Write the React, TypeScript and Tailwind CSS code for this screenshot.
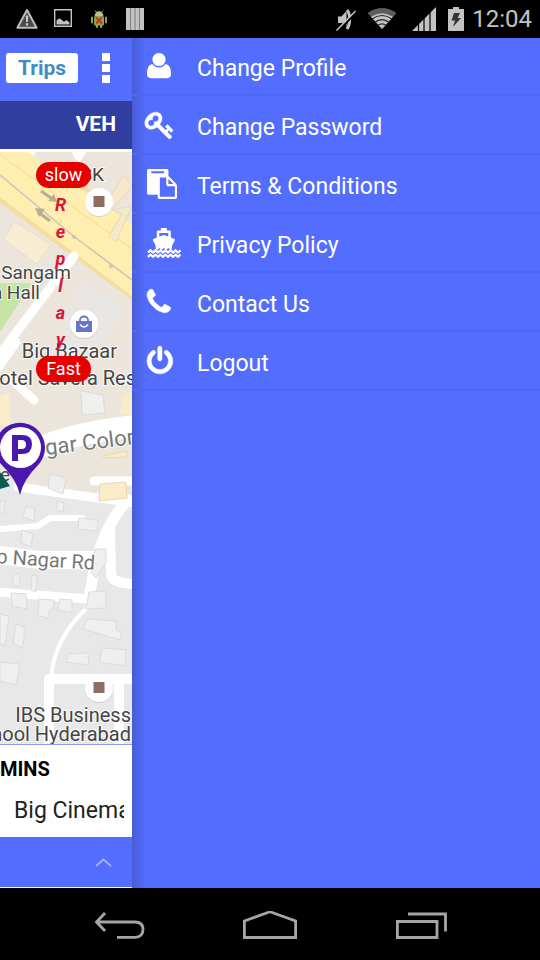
import type { ReactNode } from 'react'

const App = () => {
  return (
    <div className="min-h-screen flex flex-col overflow-hidden bg-[#536dfe] font-[Roboto,sans-serif]">
      <StatusBar />
      <div className="flex flex-1">
        <TripsPage />
        <Drawer />
      </div>
      <NavigationBar />
    </div>
  )
}

const StatusBar = () => {
  return (
    <header className="h-[38px] flex items-center justify-between bg-black pl-4 pr-2 text-[#c3c3c3]">
      <div className="flex items-center gap-[14px]">
        <svg viewBox="0 0 22 22" className="size-[22px]">
          <path d="M11 2 20.6 19.8H1.4Z" fill="#4a4a4a" stroke="#bdbdbd" strokeWidth="2" strokeLinejoin="round" />
          <path d="M9.8 7.5h2.4l-.4 6.5h-1.6zM9.9 15.2h2.2v2.2H9.9z" fill="#d0d0d0" />
        </svg>
        <svg viewBox="0 0 22 22" className="size-[22px]" fill="currentColor">
          <path d="M2 1h18v18H2zM3.4 2.4v15.2h15.2V2.4z" fillRule="evenodd" />
          <path d="M4.5 16.500v-4l2-1.800h1.800l2.400 2 1.300 1 2.500-1.800 3 2.600v2z" />
        </svg>
        <svg viewBox="0 0 22 22" className="size-[22px]">
          <g fill="#8ba653">
            <path d="M6.6 8c.2-3 2-4.700 4.400-4.700s4.200 1.700 4.400 4.700z" fill="#b4c58e" />
            <path d="M7 2.500l1.500 2M15 2.500l-1.500 2" stroke="#9ab068" strokeWidth="1" />
            <rect x="6" y="8" width="10" height="9.500" rx="1.500" />
            <rect x="3" y="8.500" width="2" height="7" rx="1" />
            <rect x="17" y="8.500" width="2" height="7" rx="1" />
            <rect x="7.800" y="16" width="2.200" height="4" rx="1" />
            <rect x="12" y="16" width="2.200" height="4" rx="1" />
          </g>
          <path d="M8 9.500l6 6M14 9.500l-6 6" stroke="#c03a1c" strokeWidth="2.200" />
        </svg>
        <svg viewBox="0 0 22 22" className="size-[22px]">
          <path d="M2 0h18v22H2z" fill="#c2c2c2" />
          <path d="M6.500 0v22M11 0v22M15.500 0v22" stroke="#7d7d7d" />
        </svg>
      </div>
      <div className="flex items-center">
        <div className="flex items-center gap-3">
          <svg viewBox="0 0 22 24" className="h-6 w-[22px]" fill="none" stroke="currentColor">
            <path d="M4 9.500h3.500l5-5.500v15l-3-3H4z" fill="currentColor" stroke="none" />
            <path d="M13 3c3.500 4 3.500 14 0 19" strokeWidth="3" />
            <path d="M4 24.500 22 5.500" stroke="#000" strokeWidth="2" />
            <path d="M2.500 23.500 21.500 4" strokeWidth="1.500" />
          </svg>
          <svg viewBox="0 0 32 24" className="h-6 w-8">
            <path d="M14 22-.5 6Q14-4 28.500 6z" fill="#5c5c5c" />
            <path d="M14 22 3 9.800Q14 2.500 25 9.800z" fill="#c3c3c3" />
            <path d="M4 12Q14 5 24 12M7 15.300Q14 10 21 15.300M10 18.300Q14 15.500 18 18.300" fill="none" stroke="#222" strokeWidth="1.200" />
          </svg>
          <svg viewBox="0 0 24 24" className="size-6">
            <path d="M0 24 24 0v24z" fill="currentColor" />
            <path d="M6.500 0v24M12 0v24M18 0v24" stroke="#000" strokeWidth="1.200" />
          </svg>
          <svg viewBox="0 0 16 24" className="h-6 w-4">
            <path d="M5 0h6v2h5v22H0V2h5z" fill="currentColor" />
            <path d="M6 6h6l-2.500 5H13L5 20l2-6.500H3.500z" fill="#333" />
          </svg>
        </div>
        <span className="ml-2 text-2xl">12:04</span>
      </div>
    </header>
  )
}

const TripsPage = () => {
  return (
    <main className="w-[132px] shrink-0 flex flex-col overflow-hidden bg-white">
      <div className="h-[63px] flex items-center justify-between bg-[#536dfe] pl-1.5 pr-5 pb-1">
        <button className="h-[30px] w-[72px] rounded-[3px] bg-white text-[21px] leading-[30px] font-bold text-[#3f8cc5]">
          Trips
        </button>
        <button aria-label="More" className="w-3 flex flex-col items-center gap-[3px]">
          <span className="size-2 bg-white" />
          <span className="size-2 bg-white" />
          <span className="size-2 bg-white" />
        </button>
      </div>
      <div className="h-12 flex items-center justify-end bg-[#303f9f] pr-4 text-[21px] font-bold text-white">
        VEH
      </div>
      <div className="relative flex-1 border-t-3 border-white">
        <TripMap />
        <div className="absolute left-9 top-2.5 flex flex-col items-center gap-[3px]">
          <button className="h-[26px] w-[55px] rounded-full bg-[#e60000] text-lg leading-[26px] text-white">
            slow
          </button>
          <div className="flex flex-col pr-1.5 text-center text-lg leading-[27px] font-bold italic text-[#dc143c]">
            {['R', 'e', 'p', 'l', 'a', 'y'].map((letter) => (
              <span key={letter}>{letter}</span>
            ))}
          </div>
          <button className="h-[26px] w-[55px] rounded-full bg-[#e60000] text-lg leading-[26px] text-white">
            Fast
          </button>
        </div>
      </div>
      <div className="h-[93px] border-t border-[#8c9cf0] pt-2 text-black">
        <p className="text-xl leading-8 font-bold">MINS</p>
        <p className="mt-2 ml-3.5 mr-2 overflow-hidden whitespace-nowrap text-[23px] leading-9 text-[#222]">
          Big Cinemas
        </p>
      </div>
      <button aria-label="Expand" className="h-[51px] flex items-center justify-end border-b border-white bg-[#536dfe] pr-5">
        <svg viewBox="0 0 17 9" className="h-[9px] w-[17px]">
          <path d="M1 8 8.500 1.500 16 8" fill="none" stroke="#a5b2ff" strokeWidth="1.800" />
        </svg>
      </button>
    </main>
  )
}

const TripMap = () => {
  return (
    <svg viewBox="0 152 132 592" preserveAspectRatio="xMinYMin slice" className="absolute inset-0 size-full">
      <path d="M0 152h132v592H0z" fill="#e8e8e8" />
      <path d="M0 152h132v352L0 478z" fill="#ebe5dc" />
      <path d="M82 280 125 313 68 384 40 372z" fill="#e8e7e4" />
      <path d="M0 283h24l8 0-32 49z" fill="#c5e4a5" />

      {/* highway */}
      <path d="M20 152 36 152 26 166 12 160zM72 152h14l-8 14z" fill="#fff" />
      <path d="M-4 148 24 152 92 191 132 245V300L0 203z" fill="#f4dda0" />
      <path d="M0 153 132 247V296L0 197z" fill="#ffeeb0" />
      <path d="M28 152 132 224V250L0 156V152z" fill="#ffeeb0" />
      <path d="M0 155 132 249" stroke="#f2db99" />
      <path d="M0 175 72 235 132 280" fill="none" stroke="#c9c5b7" strokeWidth="1.500" />
      <path d="M41 191 54 200M50 221 38 212" stroke="#b5ae97" strokeWidth="3" />
      <path d="M57 202 48 201 54 194zM35 208 45 209 39 217z" fill="#b5ae97" />
      <circle cx="74" cy="237" r="2" fill="#c9c5b7" />
      <circle cx="111" cy="266" r="2" fill="#c9c5b7" />

      {/* buildings in the north */}
      <path d="M14 221 51 245 37 264 4 240z" fill="#f8edd2" stroke="#eadfc8" />
      <path d="M124 175 132 186 112 210 132 206 116 242 109 236 122 214 104 206z" fill="#f6e9cb" stroke="#e7d9b8" />
      <path d="M0 396 10 392V428L0 425zM122 396 132 392V415L120 414z" fill="#faecc8" />
      <path d="M81 391 103 395 105 413 82 415z" fill="#efefed" stroke="#dedbd3" />

      {/* streets */}
      <g fill="none" stroke="#fff" strokeLinecap="round" strokeLinejoin="round">
        <path d="M74 256 0 354" strokeWidth="9" />
        <path d="M-2 368 16 342M10 378 34 400" strokeWidth="9" />
        <path d="M-5 448 44 446Q80 432 136 426" strokeWidth="22" />
        <path d="M18 487Q60 493 136 503M94 481H136" strokeWidth="9" />
        <path d="M0 529 38 526 50 518 82 518" strokeWidth="6" />
        <path d="M128 500Q108 520 96 560L90 592" strokeWidth="11" />
        <path d="M0 555 40 560 92 560" strokeWidth="18" />
        <path d="M110 528 111 574Q112 584 136 584" strokeWidth="10" />
        <path d="M-4 592 88 599" strokeWidth="9" />
        <path d="M87 608Q52 640 51 682" strokeWidth="4" />
        <path d="M136 679H49V750M119 682V750" strokeWidth="10" />
      </g>

      {/* buildings in the south */}
      <g fill="#efefef" stroke="#dcdcdc">
        <path d="M50 474 66 478 63 494 48 488zM0 500 5 502 3 515 0 513zM26 506 35 509 34 521 23 517zM79 518 98 520 97 531 78 529zM57 501 64 503 63 512 57 510z" />
        <path d="M22 530 33 534 31 546 21 543zM13 574H20V586H13zM32 575 37 576 36 592 31 590zM11 593 26 594 27 609 12 606z" />
        <path d="M39 599 54 600 53 609 49 610V618L38 616zM60 599 72 600V612L58 611zM89 592 106 591V608L86 609zM95 549H106V562L96 578 91 572z" />
        <path d="M0 614 9 616 5 645 0 644zM16 624 24 627V638L22 648 13 643zM0 662 20 664 16 685 0 681z" />
        <path d="M87 619 116 621V630L122 633 120 640 83 629zM68 654 88 653 89 665 66 662zM102 648 126 650 125 666 100 662z" />
      </g>
      <g fill="#faecc8" stroke="#e8d8b0">
        <path d="M100 484 126 482 127 498 99 501zM103 456 127 451V457L104 458z" />
      </g>

      {/* place pins */}
      <g fill="#bbb">
        <circle cx="99" cy="203" r="14" opacity=".5" />
        <circle cx="84" cy="325" r="14" opacity=".5" />
        <circle cx="99" cy="689" r="14" opacity=".5" />
      </g>
      <g fill="#fff">
        <circle cx="99" cy="202" r="14" />
        <circle cx="84" cy="324" r="14" />
        <circle cx="99" cy="688" r="14" />
      </g>
      <path d="M93.500 196h11v11h-11zM93.500 682h11v11h-11z" fill="#8d6e63" />
      <path d="M76 321h16v11H76z" fill="#6577c2" />
      <path d="M80 321v-1a4 3.500 0 0 1 8 0v1" fill="none" stroke="#6577c2" strokeWidth="1.800" />
      <path d="M80 324.500q4 5 8 0" fill="none" stroke="#fff" strokeWidth="1.500" />

      <g fill="#454545" stroke="#fff" strokeWidth="2" strokeOpacity=".8" paintOrder="stroke" fontSize="19">
        <text x="104" y="181" textAnchor="end">SK</text>
        <text x="71" y="279" textAnchor="end">Sangam</text>
        <text x="40" y="299" textAnchor="end">n Hall</text>
        <text x="0" y="481">e</text>
      </g>
      <g fill="#454545" stroke="#fff" strokeWidth="2" strokeOpacity=".8" paintOrder="stroke" fontSize="20">
        <text x="117" y="358" textAnchor="end">Big Bazaar</text>
        <text x="136" y="385" textAnchor="end">otel Savera Res</text>
        <text x="131" y="722" textAnchor="end">IBS Business</text>
        <text x="131" y="741" textAnchor="end">hool Hyderabad</text>
      </g>
      <g fill="#777" stroke="#fff" strokeWidth="2" strokeOpacity=".8" paintOrder="stroke">
        <text transform="translate(46 455) rotate(-7)" fontSize="22">gar Colony</text>
        <text transform="translate(-4 563) rotate(4)" fontSize="20">p Nagar Rd</text>
      </g>

      {/* parking marker */}
      <path d="M0 472 10 486 0 489z" fill="#0c5b4f" />
      <path d="M20 495Q17 480 1 464A25 25 0 1 1 39 464Q23 480 20 495z" fill="#4a18ad" />
      <circle cx="20.500" cy="447.500" r="20.500" fill="#fff" />
      <path d="M12 435H22Q32 435 32 444 32 454 22 454H18V461H12zM18 440V449H21.500Q26 449 26 444.500 26 440 21.500 440z" fill="#4a18ad" fillRule="evenodd" />
    </svg>
  )
}

const Drawer = () => {
  return (
    <aside className="flex-1 bg-[linear-gradient(to_right,#485cd2_0px,#4d64e8_6px,#536dfe_14px)]">
      <nav>
        <DrawerItem label="Change Profile">
          <Glyph viewBox="0 0 34 30">
            <circle cx="12" cy="8.500" r="6.600" />
            <path d="M5.200 13Q8.200 16.600 12 16.600T18.800 13Q24 14.200 24 22.500 24 27.200 19.500 27.200H4.500Q0 27.200 0 22.500 0 14.200 5.200 13z" />
          </Glyph>
        </DrawerItem>
        <DrawerItem label="Change Password">
          <Glyph viewBox="128 0 2031 1792">
            <path d="M832 512q0-80-56-136t-136-56-136 56-56 136q0 42 19 83-41-19-83-19-80 0-136 56t-56 136 56 136 136 56 136-56 56-136q0-42-19-83 41 19 83 19 80 0 136-56t56-136zm851 704q0 17-49 66t-66 49q-9 0-28.500-16t-36.500-33-38.500-40-24.500-26l-96 96 220 220q28 28 28 68 0 42-39 81t-81 39q-40 0-68-28l-671-671q-176 131-365 131-163 0-265.500-102.500t-102.500-265.500q0-160 95-313t248-248 313-95q163 0 265.500 102.500t102.500 265.500q0 189-131 365l355 355 96-96q-3-3-26-24.500t-40-38.500-33-36.500-16-28.500q0-17 49-66t66-49q13 0 23 10 6 6 46 44.500t82 79.500 86.500 86 73 78 28.500 41z" stroke="currentColor" strokeWidth="30" />
          </Glyph>
        </DrawerItem>
        <DrawerItem label="Terms &amp; Conditions">
          <Glyph viewBox="0 0 2031 1792">
            <path d="M768 1664h896v-640h-416q-40 0-68-28t-28-68v-416h-384v1152zm256-1440v-64q0-13-9.500-22.500t-22.500-9.500h-704q-13 0-22.500 9.500t-9.500 22.500v64q0 13 9.500 22.500t22.500 9.500h704q13 0 22.500-9.500t9.500-22.500zm256 672h299l-299-299v299zm512 128v672q0 40-28 68t-68 28h-960q-40 0-68-28t-28-68v-160h-544q-40 0-68-28t-28-68v-1344q0-40 28-68t68-28h1088q40 0 68 28t28 68v328q21 13 36 28l408 408q28 28 48 76t20 88z" />
          </Glyph>
        </DrawerItem>
        <DrawerItem label="Privacy Policy">
          <Glyph viewBox="0 0 34 30">
            <path d="M13.800 0h6v2.500H22.500q1.300 0 1.300 1.300V9.500L27 10.700q1.300.5.700 1.700-2.900 4-3 8.600L23.500 22l-2.200-2-2.300 2-2.300-2-2.200 2-2.200-2-2.100 2L9 21q-.1-4.600-3-8.600-.6-1.200.7-1.700L9.800 9.500V3.800Q9.800 2.500 11.100 2.500H13.800zM12.300 5V8.600L16.800 7 21.300 8.600V5z" fillRule="evenodd" />
            <path d="M1 24.500 3.500 22.300 6 24.500 8.500 22.300 11 24.500 13.500 22.300 16 24.500 18.500 22.300 21 24.500 23.500 22.300 26 24.500 28.500 22.300 31 24.500 33.500 22.300M1 28.800 3.500 26.600 6 28.800 8.500 26.600 11 28.800 13.500 26.600 16 28.800 18.500 26.600 21 28.800 23.500 26.600 26 28.800 28.500 26.600 31 28.800 33.500 26.600" fill="none" stroke="currentColor" strokeWidth="2.200" />
          </Glyph>
        </DrawerItem>
        <DrawerItem label="Contact Us">
          <Glyph viewBox="192 0 2031 1792">
            <path d="M1600 1240q0 27-10 70.500t-21 68.500q-21 50-122 106-94 51-186 51-27 0-53-3.500t-57.500-12.500-47-14.500-55.500-20.500-49-18q-98-35-175-83-127-79-264-216t-216-264q-48-77-83-175-3-9-18-49t-20.500-55.500-14.500-47-12.500-57.500-3.500-53q0-92 51-186 56-101 106-122 25-11 68.500-21t70.500-10q14 0 21 3 18 6 53 76 11 19 30 54t35 63.500 31 53.500q3 4 17.500 25t21.500 35.500 7 28.500q0 20-28.500 50t-62 55-62 53-28.500 46q0 9 5 22.500t8.500 20.500 14 24 11.500 19q76 137 174 235t235 174q2 1 19 11.500t24 14 20.500 8.500 22.500 5q18 0 46-28.500t53-62 55-62 50-28.500q14 0 28.500 7t35.500 21.500 25 17.500q25 15 53.500 31t63.500 35 54 30q70 35 76 53 3 7 3 21z" stroke="currentColor" strokeWidth="30" />
          </Glyph>
        </DrawerItem>
        <DrawerItem label="Logout">
          <Glyph viewBox="128 0 2031 1792">
            <path d="M1664 896q0 156-61 298t-164 245-245 164-298 61-298-61-245-164-164-245-61-298q0-182 80.500-343t226.500-270q43-32 95.500-25t83.500 50q32 42 24.500 94.500t-49.500 84.500q-98 74-151.500 181t-53.500 228q0 104 40.500 198.500t109.500 163.500 163.500 109.500 198.500 40.500 198.500-40.500 163.500-109.500 109.500-163.500 40.500-198.500q0-121-53.500-228t-151.500-181q-42-32-49.500-84.500t24.500-94.500q31-43 84-50t95 25q146 109 226.500 270t80.500 343zm-640-768v640q0 52-38 90t-90 38-90-38-38-90v-640q0-52 38-90t90-38 90 38 38 90z" stroke="currentColor" strokeWidth="30" />
          </Glyph>
        </DrawerItem>
      </nav>
    </aside>
  )
}

const DrawerItem = ({ label, children }: { label: string; children: ReactNode }) => {
  return (
    <a
      href="#"
      className="h-[59px] flex items-center gap-4 border-b-2 border-[#4e67f4] pl-[15px] text-white first:h-[58px]"
    >
      {children}
      <span className="pt-1.5 text-[23px] leading-7">{label}</span>
    </a>
  )
}

const Glyph = ({ viewBox, children }: { viewBox: string; children: ReactNode }) => {
  return (
    <svg viewBox={viewBox} className="h-[30px] w-[34px] shrink-0 overflow-visible" fill="currentColor">
      {children}
    </svg>
  )
}

const NavigationBar = () => {
  return (
    <footer className="h-[72px] flex items-center justify-center gap-24 bg-black pt-1 text-[#a6a6a6]">
      <button aria-label="Back">
        <svg viewBox="0 0 54 30" className="h-[30px] w-[54px]" fill="none" stroke="currentColor" strokeWidth="2.800">
          <path d="M3 11H42Q50 11 50 18.500T42 26.300H24M12 2 3.500 11 12 20" />
        </svg>
      </button>
      <button aria-label="Home">
        <svg viewBox="0 0 54 30" className="h-[30px] w-[54px]" fill="none" stroke="currentColor" strokeWidth="2.800">
          <path d="M1.400 10 27 .8 52.600 10V26.500H1.400z" />
        </svg>
      </button>
      <button aria-label="Recent apps">
        <svg viewBox="0 0 54 30" className="h-[30px] w-[54px]" fill="none" stroke="currentColor" strokeWidth="2.800">
          <path d="M4.400 10.500H44V26.500H4.400zM15 3H52.500V20.500" />
        </svg>
      </button>
    </footer>
  )
}

export default App
